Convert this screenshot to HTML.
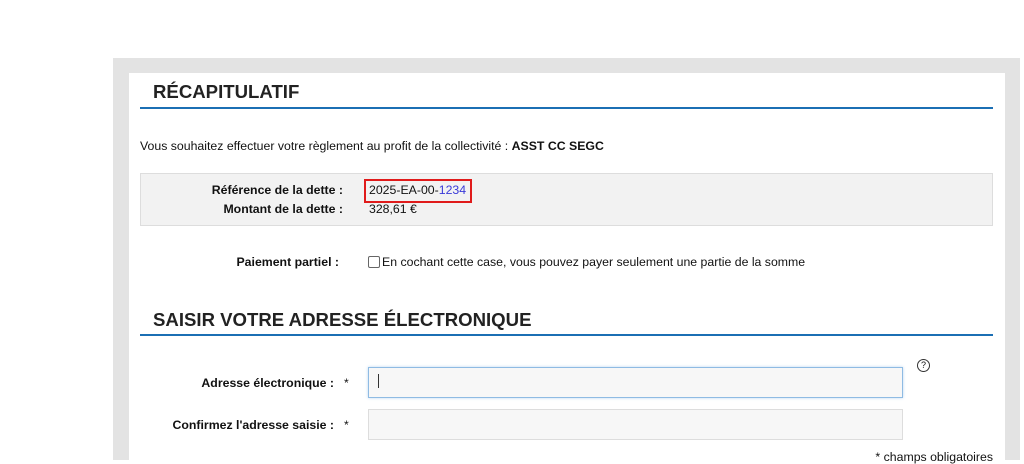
<!DOCTYPE html>
<html><head><meta charset="utf-8"><style>
body{margin:0;width:1024px;height:460px;overflow:hidden;background:#fff;font-family:"Liberation Sans",Arial,sans-serif;color:#111;position:relative}
.a{position:absolute}
.h{font-weight:bold;font-size:18.6px;color:#222}
.line{height:2px;background:#1b6fb4;left:140px;width:853px}
.t{font-size:12.3px}
.b{font-weight:bold}
.r{text-align:right}
</style></head><body>
<div class="a" style="left:113px;top:58px;width:907px;height:402px;background:#e3e3e3"></div>
<div class="a" style="left:129px;top:73px;width:876px;height:387px;background:#fff"></div>
<div class="a h" style="left:153px;top:81px">RÉCAPITULATIF</div>
<div class="a line" style="top:107px"></div>
<div class="a t" style="left:140px;top:139px">Vous souhaitez effectuer votre règlement au profit de la collectivité : <b>ASST CC SEGC</b></div>
<div class="a" style="left:140px;top:173px;width:851px;height:51px;background:#f2f2f2;border:1px solid #ddd"></div>
<div class="a t b r" style="left:150px;width:193px;top:183px">Référence de la dette :</div>
<div class="a t b r" style="left:150px;width:193px;top:202px">Montant de la dette :</div>
<div class="a" style="left:364px;top:179px;width:104px;height:20px;border:2px solid #e01b1b"></div>
<div class="a t" style="left:369px;top:183px">2025-EA-00-<span style="color:#3a3ad8">1234</span></div>
<div class="a t" style="left:369px;top:202px">328,61 €</div>
<div class="a t b r" style="left:150px;width:189px;top:255px">Paiement partiel :</div>
<div class="a" style="left:368px;top:256px;width:10px;height:10px;border:1px solid #666;border-radius:2px"></div>
<div class="a t" style="left:382px;top:255px">En cochant cette case, vous pouvez payer seulement une partie de la somme</div>
<div class="a h" style="left:153px;top:309px">SAISIR VOTRE ADRESSE ÉLECTRONIQUE</div>
<div class="a line" style="top:334px"></div>
<div class="a t b r" style="left:150px;width:184px;top:376px">Adresse électronique :</div>
<div class="a t" style="left:344px;top:376px">*</div>
<div class="a" style="left:368px;top:367px;width:533px;height:29px;border:1px solid #8fbbe3;background:#f7f7f7;box-shadow:0 0 3px #bcd8f2"></div>
<div class="a" style="left:378px;top:374px;width:1px;height:14px;background:#333"></div>
<div class="a" style="left:917px;top:359px;width:11px;height:11px;border:1px solid #333;border-radius:50%;font-size:9px;line-height:11px;text-align:center">?</div>
<div class="a t b r" style="left:150px;width:184px;top:418px">Confirmez l'adresse saisie :</div>
<div class="a t" style="left:344px;top:418px">*</div>
<div class="a" style="left:368px;top:409px;width:533px;height:29px;border:1px solid #ddd;background:#f7f7f7"></div>
<div class="a t r" style="left:793px;width:200px;top:450px">* champs obligatoires</div>
</body></html>
